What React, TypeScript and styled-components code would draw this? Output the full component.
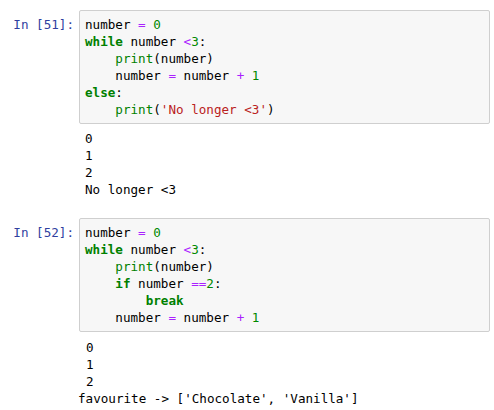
import React from "react";
import styled, { createGlobalStyle } from "styled-components";

const Global = createGlobalStyle`
  html, body { margin: 0; padding: 0; background: #ffffff; }
  body { font-family: "DejaVu Sans Mono", "Liberation Mono", monospace; overflow: hidden; }
`;

const Notebook = styled.div`
  display: flex;
  flex-direction: column;
  padding: 10px 4px 0 0;
  width: 494px;
  box-sizing: border-box;
`;

const Cell = styled.div<{ $gap: number }>`
  display: flex;
  flex-direction: column;
  gap: ${(p) => p.$gap}px;
  margin-bottom: 20px;
`;

const InputRow = styled.div`
  display: grid;
  grid-template-columns: 79px 1fr;
  align-items: start;
`;

const Prompt = styled.div`
  color: #303f9f;
  font-size: 12.6px;
  line-height: 17px;
  text-align: right;
  padding: 6px 5px 0 0;
  white-space: pre;
`;

const CodeBox = styled.pre`
  margin: 0;
  background: #f7f7f7;
  border: 1px solid #cfcfcf;
  border-radius: 2px;
  padding: 5px 5px;
  font-family: inherit;
  font-size: 12.6px;
  line-height: 17px;
  color: #000000;
`;

const OutputArea = styled.pre<{ $indent: number }>`
  margin: 0;
  padding-left: ${(p) => p.$indent}px;
  font-family: inherit;
  font-size: 12.6px;
  line-height: 17px;
  color: #000000;
`;

const ClippedLine = styled.div`
  margin-left: -8px;
  white-space: pre;
`;

const Tok = styled.span<{ $t: string }>`
  color: ${(p) =>
    p.$t === "kw" || p.$t === "bi"
      ? "#008000"
      : p.$t === "op"
      ? "#aa22ff"
      : p.$t === "num"
      ? "#008800"
      : p.$t === "str"
      ? "#ba2121"
      : "#000000"};
  font-weight: ${(p) => (p.$t === "kw" ? "bold" : "normal")};
`;

type T = [string, string];

const cell1: T[][] = [
  [["n", "number "], ["op", "="], ["n", " "], ["num", "0"]],
  [["kw", "while"], ["n", " number "], ["op", "<"], ["num", "3"], ["n", ":"]],
  [["n", "    "], ["bi", "print"], ["n", "(number)"]],
  [["n", "    number "], ["op", "="], ["n", " number "], ["op", "+"], ["n", " "], ["num", "1"]],
  [["kw", "else"], ["n", ":"]],
  [["n", "    "], ["bi", "print"], ["n", "("], ["str", "'No longer <3'"], ["n", ")"]],
];

const cell2: T[][] = [
  [["n", "number "], ["op", "="], ["n", " "], ["num", "0"]],
  [["kw", "while"], ["n", " number "], ["op", "<"], ["num", "3"], ["n", ":"]],
  [["n", "    "], ["bi", "print"], ["n", "(number)"]],
  [["n", "    "], ["kw", "if"], ["n", " number "], ["op", "=="], ["num", "2"], ["n", ":"]],
  [["n", "        "], ["kw", "break"]],
  [["n", "    number "], ["op", "="], ["n", " number "], ["op", "+"], ["n", " "], ["num", "1"]],
];

const Code = ({ lines }: { lines: T[][] }) => (
  <CodeBox>
    {lines.map((line, i) => (
      <React.Fragment key={i}>
        {line.map(([t, s], j) => (
          <Tok key={j} $t={t}>
            {s}
          </Tok>
        ))}
        {i < lines.length - 1 ? "\n" : ""}
      </React.Fragment>
    ))}
  </CodeBox>
);

export default function App() {
  return (
    <>
      <Global />
      <Notebook>
        <Cell $gap={6}>
          <InputRow>
            <Prompt>In [51]:</Prompt>
            <Code lines={cell1} />
          </InputRow>
          <OutputArea $indent={85}>{"0\n1\n2\nNo longer <3"}</OutputArea>
        </Cell>
        <Cell $gap={7}>
          <InputRow>
            <Prompt>In [52]:</Prompt>
            <Code lines={cell2} />
          </InputRow>
          <OutputArea $indent={86}>
            {"0\n1\n2"}
            <ClippedLine>{"favourite -> ['Chocolate', 'Vanilla']"}</ClippedLine>
          </OutputArea>
        </Cell>
      </Notebook>
    </>
  );
}
